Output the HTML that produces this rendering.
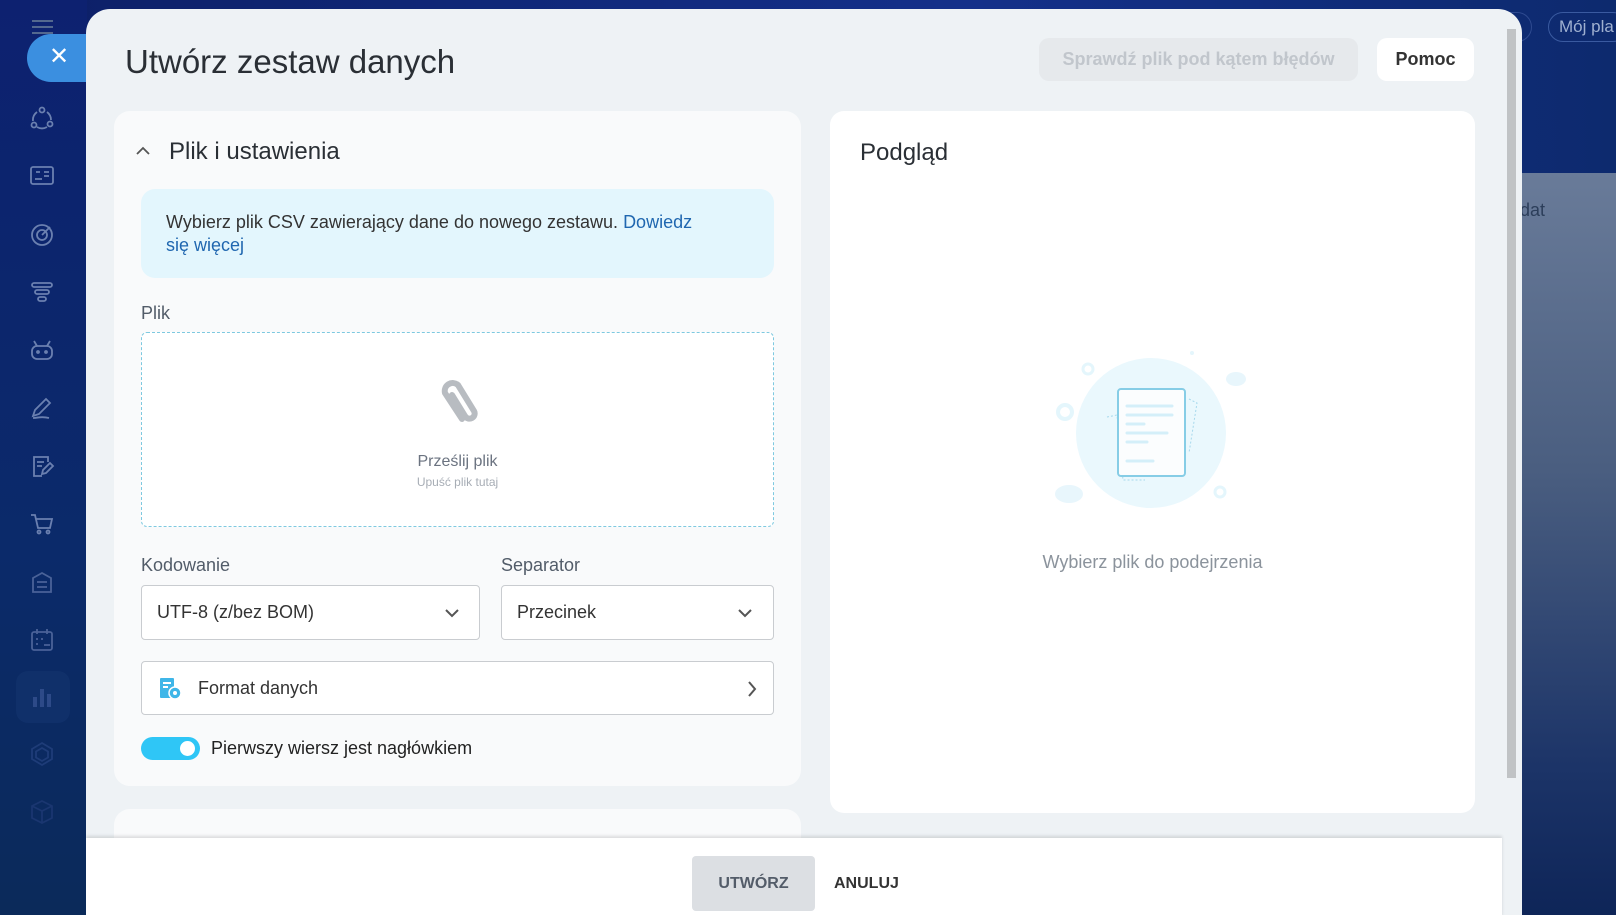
<!DOCTYPE html>
<html><head><meta charset="utf-8"><style>
*{box-sizing:border-box;margin:0;padding:0}
body{width:1616px;height:915px;overflow:hidden;font-family:"Liberation Sans",sans-serif;background:#0b2260;position:relative}
.bgtop{position:absolute;left:0;top:0;width:1616px;height:173px;background:linear-gradient(90deg,#0c1f66,#14308a 60%,#0d2a6e)}
.bgbot{position:absolute;left:1500px;top:173px;width:116px;height:742px;background:linear-gradient(180deg,#697b99,#4a5e80 40%,#1c3468 80%,#0e2558)}
.side{position:absolute;left:0;top:0;width:87px;height:915px;background:linear-gradient(180deg,#0d2170,#0b2a6a 60%,#0b2a5a)}
.ico{position:absolute;left:28px;width:28px;height:28px}
.modal{position:absolute;left:86px;top:9px;width:1436px;height:906px;background:#eef2f5;border-radius:24px 24px 0 0;overflow:hidden}
.card{position:absolute;background:#f9fafb;border-radius:16px}
.lbl{position:absolute;font-size:18px;color:#525c69}
.sel{position:absolute;background:#fff;border:1px solid #c9ccd0;border-radius:4px;font-size:18px;color:#333;padding-left:15px;line-height:52px}
</style></head><body>
<div class="bgtop"></div>
<div class="bgbot"></div>
<div style="position:absolute;left:1520px;top:200px;font-size:18px;color:#2c3e5a">dat</div>
<div style="position:absolute;left:1548px;top:12px;width:80px;height:30px;border:1px solid #3a5aa0;border-radius:15px;color:#9fb0d0;font-size:17px;line-height:28px;padding-left:10px">Mój pla</div>
<div style="position:absolute;left:1480px;top:12px;width:52px;height:30px;border:1px solid #2e4a90;border-radius:15px"></div>
<div class="side">
 <div style="position:absolute;left:32px;top:20px;width:21px;height:2px;background:#53688f;box-shadow:0 6px 0 #53688f,0 12px 0 #53688f"></div>
 <svg class="ico" style="top:104px" viewBox="0 0 28 28" fill="none" stroke="#6b80b0" stroke-width="1.8"><circle cx="14" cy="6" r="2.5"/><circle cx="6" cy="21" r="2.5"/><circle cx="22" cy="20" r="2.5"/><path d="M9 8a10 10 0 0 0-4 9M19 8a10 10 0 0 1 4 8M9 23a10 10 0 0 0 10 0"/></svg>
 <svg class="ico" style="top:162px" viewBox="0 0 28 28" fill="none" stroke="#6b80b0" stroke-width="1.8"><rect x="3" y="5" width="22" height="17" rx="2"/><path d="M8 10h4M16 10h5M16 14h5M7 17h7"/></svg>
 <svg class="ico" style="top:220px" viewBox="0 0 28 28" fill="none" stroke="#6b80b0" stroke-width="1.8"><circle cx="14" cy="15" r="10"/><circle cx="14" cy="15" r="5"/><path d="M14 15l8-8"/></svg>
 <svg class="ico" style="top:278px" viewBox="0 0 28 28" fill="none" stroke="#6b80b0" stroke-width="1.8"><rect x="4" y="5" width="20" height="4" rx="2"/><rect x="7" y="12" width="14" height="4" rx="2"/><rect x="10" y="19" width="8" height="4" rx="2"/></svg>
 <svg class="ico" style="top:336px" viewBox="0 0 28 28" fill="none" stroke="#6b80b0" stroke-width="1.8"><rect x="4" y="10" width="20" height="13" rx="5"/><path d="M6 5l3 5M22 5l-3 5"/><circle cx="10" cy="16" r="1"/><circle cx="18" cy="16" r="1"/></svg>
 <svg class="ico" style="top:394px" viewBox="0 0 28 28" fill="none" stroke="#6b80b0" stroke-width="1.8"><path d="M5 22l2-6L18 5l4 4-11 11zM5 24c5 0 8-2 16 0"/></svg>
 <svg class="ico" style="top:452px" viewBox="0 0 28 28" fill="none" stroke="#6b80b0" stroke-width="1.8"><path d="M20 10V5H6v19h8M9 10h7M9 14h5"/><path d="M14 22l1-4 7-7 3 3-7 7z"/></svg>
 <svg class="ico" style="top:510px" viewBox="0 0 28 28" fill="none" stroke="#6b80b0" stroke-width="1.8"><path d="M3 5h4l3 13h12l2-9H8"/><circle cx="11" cy="22" r="1.5"/><circle cx="20" cy="22" r="1.5"/></svg>
 <svg class="ico" style="top:568px" viewBox="0 0 28 28" fill="none" stroke="#4a6298" stroke-width="1.8"><path d="M5 24V10l9-5 9 5v14zM9 14h10M9 19h10"/></svg>
 <svg class="ico" style="top:626px" viewBox="0 0 28 28" fill="none" stroke="#4a6298" stroke-width="1.8"><rect x="4" y="6" width="20" height="18" rx="2"/><path d="M9 3v5M19 3v5M8 13h2M13 13h2M8 18h2M16 19h6"/></svg>
 <div style="position:absolute;left:16px;top:671px;width:54px;height:52px;border-radius:12px;background:#10306a"></div>
 <svg class="ico" style="top:683px" viewBox="0 0 28 28" fill="#2d4a88"><rect x="5" y="14" width="4" height="10"/><rect x="12" y="6" width="4" height="18"/><rect x="19" y="11" width="4" height="13"/></svg>
 <svg class="ico" style="top:740px" viewBox="0 0 28 28" fill="none" stroke="#1e3c78" stroke-width="1.8"><path d="M14 3l10 6v10l-10 6-10-6V9z"/><path d="M14 8l6 3.5v6L14 21l-6-3.5v-6z"/></svg>
 <svg class="ico" style="top:798px" viewBox="0 0 28 28" fill="none" stroke="#1a3670" stroke-width="1.8"><path d="M14 3l10 5v12l-10 5-10-5V8zM4 8l10 5 10-5M14 13v12"/></svg>
</div>
<div style="position:absolute;left:27px;top:34px;width:70px;height:48px;border-radius:24px 0 0 24px;background:#3b8fe0;color:#fff;font-size:24px;line-height:46px;padding-left:22px">✕</div>

<div class="modal">
 <div style="position:absolute;left:39px;top:34px;font-size:33px;color:#2a2f35">Utwórz zestaw danych</div>
 <div style="position:absolute;left:953px;top:29px;width:319px;height:43px;border-radius:10px;background:#e6e9ec;color:#c1c6cc;font-size:18px;font-weight:bold;text-align:center;line-height:43px">Sprawdź plik pod kątem błędów</div>
 <div style="position:absolute;left:1291px;top:29px;width:97px;height:43px;border-radius:10px;background:#fff;color:#333;font-size:18px;font-weight:bold;text-align:center;line-height:43px">Pomoc</div>
 <div style="position:absolute;left:1421px;top:20px;width:9px;height:749px;background:#c0c3c5"></div>

 <div class="card" style="left:28px;top:102px;width:687px;height:675px">
  <svg style="position:absolute;left:21px;top:34px" width="16" height="12" viewBox="0 0 16 12" fill="none" stroke="#555" stroke-width="1.8"><path d="M2 9l6-6 6 6"/></svg>
  <div style="position:absolute;left:55px;top:27px;font-size:24px;color:#2a2f35">Plik i ustawienia</div>
  <div style="position:absolute;left:27px;top:78px;width:633px;height:89px;border-radius:14px;background:#e3f6fd;padding:22px 60px 22px 25px;font-size:18px;line-height:23px;color:#333">Wybierz plik CSV zawierający dane do nowego zestawu. <span style="color:#2067b0">Dowiedz się więcej</span></div>
  <div class="lbl" style="left:27px;top:192px">Plik</div>
  <div style="position:absolute;left:27px;top:221px;width:633px;height:195px;border:1px dashed #7ec9e0;border-radius:6px;background:#fff">
   <svg style="position:absolute;left:290px;top:40px" width="50" height="56" viewBox="0 0 50 56" fill="none" stroke="#b8bcc1" stroke-width="6" stroke-linecap="round"><path d="M30 46L13 20a8 8 0 0 1 13-8l16 26a5 5 0 0 1-9 5L20 22"/></svg>
   <div style="position:absolute;width:100%;top:120px;text-align:center;font-size:16px;color:#6b7380">Prześlij plik</div>
   <div style="position:absolute;width:100%;top:142px;text-align:center;font-size:12px;color:#a7adb5">Upuść plik tutaj</div>
  </div>
  <div class="lbl" style="left:27px;top:444px">Kodowanie</div>
  <div class="lbl" style="left:387px;top:444px">Separator</div>
  <div class="sel" style="left:27px;top:474px;width:339px;height:55px">UTF-8 (z/bez BOM)</div>
  <div class="sel" style="left:387px;top:474px;width:273px;height:55px">Przecinek</div>
  <svg style="position:absolute;left:330px;top:496px" width="16" height="12" viewBox="0 0 16 12" fill="none" stroke="#555" stroke-width="2"><path d="M2 3l6 6 6-6"/></svg>
  <svg style="position:absolute;left:623px;top:496px" width="16" height="12" viewBox="0 0 16 12" fill="none" stroke="#555" stroke-width="2"><path d="M2 3l6 6 6-6"/></svg>
  <div class="sel" style="left:27px;top:550px;width:633px;height:54px;padding-left:56px">Format danych</div>
  <svg style="position:absolute;left:45px;top:566px" width="24" height="24" viewBox="0 0 24 24"><rect x="1" y="1" width="14" height="20" rx="1" fill="#3fb6e8"/><path d="M4 6h8M4 10h5" stroke="#fff" stroke-width="2"/><circle cx="16" cy="16" r="6" fill="#3fb6e8" stroke="#fff" stroke-width="1.5"/><circle cx="16" cy="16" r="2" fill="#fff"/></svg>
  <svg style="position:absolute;left:632px;top:569px" width="12" height="18" viewBox="0 0 12 18" fill="none" stroke="#555" stroke-width="2"><path d="M3 2l6 7-6 7"/></svg>
  <div style="position:absolute;left:27px;top:626px;width:59px;height:23px;border-radius:12px;background:#2fc6f6"><div style="position:absolute;right:5px;top:4px;width:15px;height:15px;border-radius:50%;background:#fff"></div></div>
  <div style="position:absolute;left:97px;top:627px;font-size:18px;color:#222">Pierwszy wiersz jest nagłówkiem</div>
 </div>
 <div class="card" style="left:28px;top:800px;width:687px;height:60px"></div>

 <div style="position:absolute;left:744px;top:102px;width:645px;height:702px;background:#fff;border-radius:14px">
  <div style="position:absolute;left:30px;top:28px;font-size:24px;color:#2a2f35">Podgląd</div>
  <svg style="position:absolute;left:209px;top:228px" width="240" height="190" viewBox="0 0 240 190">
   <circle cx="112" cy="94" r="75" fill="#eaf8fd"/>
   <circle cx="49" cy="30" r="5" fill="none" stroke="#e4f6fc" stroke-width="3"/>
   <circle cx="26" cy="73" r="7" fill="none" stroke="#e4f6fc" stroke-width="4"/>
   <circle cx="181" cy="153" r="5" fill="none" stroke="#e4f6fc" stroke-width="3"/>
   <circle cx="153" cy="14" r="2" fill="#e4f6fc"/>
   <ellipse cx="30" cy="155" rx="14" ry="9" fill="#e8f6fc"/>
   <ellipse cx="197" cy="40" rx="10" ry="7" fill="#e8f6fc"/>
   <path d="M68 78l10-2 6 65 22 0" fill="none" stroke="#a6d8ec" stroke-dasharray="2 2"/>
   <path d="M150 60l8 4-8 50" fill="none" stroke="#a6d8ec" stroke-dasharray="2 2"/>
   <rect x="79" y="50" width="67" height="87" rx="3" fill="#fbfdfe" stroke="#86cde6" stroke-width="2"/>
   <g stroke="#d4eff9" stroke-width="3" stroke-linecap="round"><path d="M88 67h45M88 76h45M88 85h17M88 94h40M88 103h20M88 122h26"/></g>
  </svg>
  <div style="position:absolute;width:100%;top:441px;text-align:center;font-size:18px;color:#8b939c">Wybierz plik do podejrzenia</div>
 </div>

 <div style="position:absolute;left:0;top:829px;width:1416px;height:80px;background:#fff;box-shadow:0 -2px 3px rgba(0,0,0,.12)">
  <div style="position:absolute;left:606px;top:18px;width:123px;height:55px;border-radius:4px;background:#dcdfe3;color:#535c69;font-size:16px;font-weight:bold;text-align:center;line-height:55px">UTWÓRZ</div>
  <div style="position:absolute;left:748px;top:18px;color:#333;font-size:16px;font-weight:bold;line-height:55px">ANULUJ</div>
 </div>
</div>
</body></html>
